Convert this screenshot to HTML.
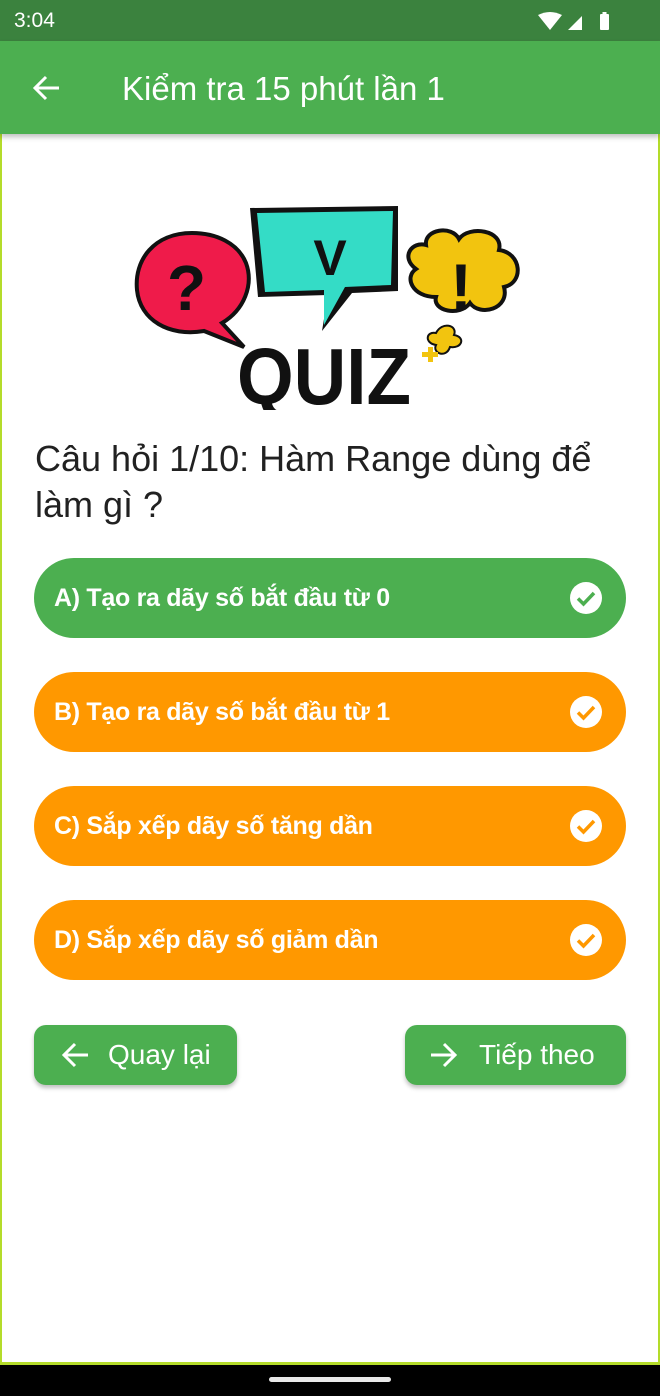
<!DOCTYPE html>
<html><head><meta charset="utf-8"><style>
*{margin:0;padding:0;box-sizing:border-box}
body{width:660px;height:1396px;position:relative;overflow:hidden;background:#fff;font-family:"Liberation Sans",sans-serif}
.frame{position:absolute;left:0;top:0;width:660px;height:1365px;border:2px solid #b4dc2a;border-bottom:3px solid #b4dc2a}
.status{position:absolute;left:0;top:0;width:660px;height:41px;background:#3b823e;color:#fff}
.app{position:absolute;left:0;top:41px;width:660px;height:93px;background:#4caf50;box-shadow:0 3px 5px rgba(0,0,0,.25)}
.title{position:absolute;left:122px;top:29px;font-size:33px;color:#fff}
.q{position:absolute;left:35px;top:436px;font-size:36px;line-height:46px;color:#212121;width:585px}
.opt{position:absolute;left:34px;width:592px;height:80px;border-radius:40px;color:#fff;font-weight:bold;font-size:25px;letter-spacing:-.3px;line-height:80px;padding-left:20px}
.opt svg{position:absolute;right:24px;top:24px}
.btn{position:absolute;top:1025px;height:60px;background:#4caf50;border-radius:12px;color:#fff;font-size:28px;box-shadow:0 3px 4px rgba(0,0,0,.25)}
.btn span{position:absolute;top:14px}
.btn svg{position:absolute;top:16px}
</style></head><body>
<div class="frame"></div>
<div class="status">
<div style="position:absolute;left:14px;top:9px;font-size:21px">3:04</div>
<svg style="position:absolute;left:538px;top:12px" width="76" height="20" viewBox="0 0 76 20"><path d="M0 3 Q12 -3 24 3 L12 18 Z" fill="#fff"/><path d="M30 18 L44 4 L44 18 Z" fill="#fff"/><rect x="62" y="2" width="9" height="16" rx="1" fill="#fff"/><rect x="64.5" y="0" width="4" height="3" fill="#fff"/></svg>
</div>
<div class="app">
<svg style="position:absolute;left:33px;top:34px" width="28" height="26" viewBox="0 0 28 26"><path d="M26 13 H3 M13 2 L2 13 L13 24" stroke="#fff" stroke-width="3" fill="none"/></svg>
<div class="title">Kiểm tra 15 phút lần 1</div>
</div>
<svg style="position:absolute;left:134px;top:205px" width="390" height="205" viewBox="0 0 390 205">
<path d="M58 28 C20 28 0 55 3 85 C6 115 35 132 70 126 L110 142 L88 118 C110 105 120 80 112 58 C104 38 82 28 58 28Z" fill="#ef1b4a" stroke="#111" stroke-width="4"/>
<text x="33" y="105" font-family="Liberation Sans" font-weight="bold" font-size="64" fill="#111">?</text>
<path d="M116 3 L264 1 L264 86 L218 88 L188 126 L194 90 L124 92 Z" fill="#111"/>
<path d="M123 8 L259 6 L257 80 L211 82 L190 120 L190 85 L131 87 Z" fill="#34dcc6"/>
<text x="196" y="70" font-family="Liberation Sans" font-weight="bold" font-size="50" fill="#111" text-anchor="middle">V</text>
<path d="M292 40 C290 24 318 20 325 34 C335 20 370 25 365 45 C388 48 390 78 370 82 C376 104 346 112 336 98 C326 112 298 106 302 92 C278 92 270 72 282 64 C266 52 278 36 292 40Z" fill="#f2c40f" stroke="#111" stroke-width="4"/>
<text x="327" y="105" font-family="Liberation Sans" font-weight="bold" font-size="66" fill="#111" text-anchor="middle">!</text>
<path d="M302 128 C308 116 324 120 320 130 C332 132 328 144 316 142 C312 154 298 148 302 140 C290 138 292 126 302 128Z" fill="#f2c40f" stroke="#111" stroke-width="2"/>
<path d="M288 147 l6 0 0 -5 5 0 0 5 5 0 0 5 -5 0 0 5 -5 0 0 -5 -6 0Z" fill="#f2c40f"/>
<text x="103" y="199" font-family="Liberation Sans" font-weight="bold" font-size="80" fill="#111" textLength="174" lengthAdjust="spacingAndGlyphs">QUIZ</text>
</svg>
<div class="q">Câu hỏi 1/10: Hàm Range dùng để làm gì ?</div>
<div class="opt" style="top:558px;background:#4caf50">A) Tạo ra dãy số bắt đầu từ 0<svg width="32" height="32" viewBox="0 0 32 32"><circle cx="16" cy="16" r="16" fill="#fff"/><path d="M8 16.5 L13.5 22 L24 11" stroke="#4caf50" stroke-width="3.5" fill="none"/></svg></div>
<div class="opt" style="top:672px;background:#ff9800">B) Tạo ra dãy số bắt đầu từ 1<svg width="32" height="32" viewBox="0 0 32 32"><circle cx="16" cy="16" r="16" fill="#fff"/><path d="M8 16.5 L13.5 22 L24 11" stroke="#ff9800" stroke-width="3.5" fill="none"/></svg></div>
<div class="opt" style="top:786px;background:#ff9800">C) Sắp xếp dãy số tăng dần<svg width="32" height="32" viewBox="0 0 32 32"><circle cx="16" cy="16" r="16" fill="#fff"/><path d="M8 16.5 L13.5 22 L24 11" stroke="#ff9800" stroke-width="3.5" fill="none"/></svg></div>
<div class="opt" style="top:900px;background:#ff9800">D) Sắp xếp dãy số giảm dần<svg width="32" height="32" viewBox="0 0 32 32"><circle cx="16" cy="16" r="16" fill="#fff"/><path d="M8 16.5 L13.5 22 L24 11" stroke="#ff9800" stroke-width="3.5" fill="none"/></svg></div>
<div class="btn" style="left:34px;width:203px"><svg style="left:26px" width="30" height="28" viewBox="0 0 30 28"><path d="M28 14 H4 M15 3 L4 14 L15 25" stroke="#fff" stroke-width="3" fill="none"/></svg><span style="left:74px">Quay lại</span></div>
<div class="btn" style="left:405px;width:221px"><svg style="left:24px" width="30" height="28" viewBox="0 0 30 28"><path d="M2 14 H26 M15 3 L26 14 L15 25" stroke="#fff" stroke-width="3" fill="none"/></svg><span style="left:74px">Tiếp theo</span></div>
<div style="position:absolute;left:0;top:1365px;width:660px;height:31px;background:#000"></div>
<div style="position:absolute;left:269px;top:1377px;width:122px;height:5px;border-radius:3px;background:#e8e8e8"></div>
</body></html>
